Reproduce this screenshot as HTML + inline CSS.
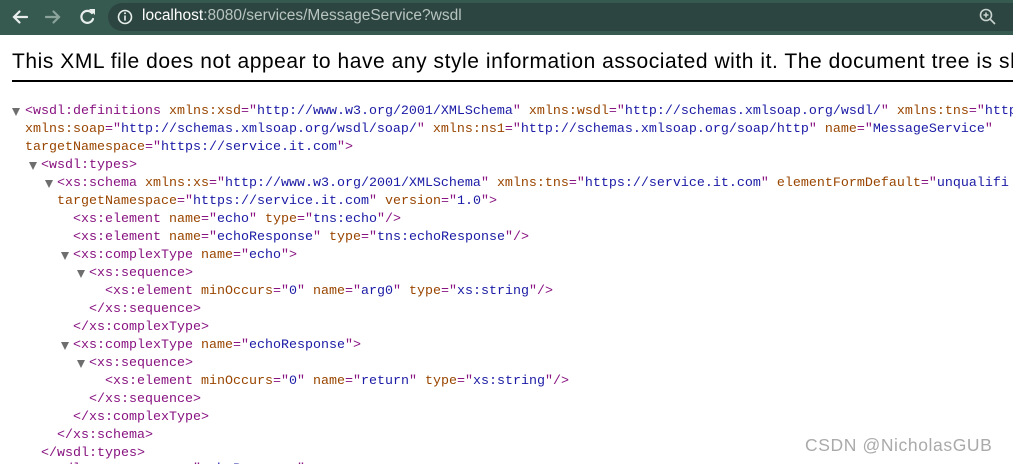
<!DOCTYPE html>
<html><head><meta charset="utf-8"><style>
html,body{margin:0;width:1013px;height:464px;overflow:hidden}
body{background:#fff;position:relative;font-family:"Liberation Sans",sans-serif}
.wrap{position:absolute;left:0;top:0;width:1013px;height:464px;overflow:hidden}
.bar{position:absolute;left:0;top:0;width:1013px;height:35px;background:#375a50}
.pill{position:absolute;left:108px;top:3px;width:905px;height:28px;border-radius:14px 0 0 14px;background:#2d4540}
.url{position:absolute;left:142px;top:7px;font-size:15.5px;color:#b8c4c0}
.url b{font-weight:normal;color:#fff}
h1{position:absolute;left:12px;top:50px;margin:0;font-weight:normal;font-size:21px;letter-spacing:0.55px;white-space:nowrap;color:#000}
.rule{position:absolute;left:12px;top:80px;width:1001px;height:2px;background:#000}
.l{position:absolute;white-space:pre;font-family:"Liberation Mono",monospace;font-size:13.33px;line-height:18px;height:18px}
.t{color:#881280}.a{color:#994500}.v{color:#1a1aa6}
.tri{position:absolute;width:0;height:0;border-left:4.5px solid transparent;border-right:4.5px solid transparent;border-top:8px solid #6e6e6e}
.wm{position:absolute;left:805px;top:435px;font-size:17.5px;letter-spacing:0.6px;color:#aaa}
.c{position:absolute;left:0;top:3px;width:1013px;height:461px;overflow:hidden}
</style></head><body><div class="wrap">
<div class="bar"></div>
<div class="pill"></div>
<svg style="position:absolute;left:0;top:0" width="140" height="35">
<g fill="none" stroke-width="2.2" stroke-linecap="round">
<path d="M27 17H14M19.5 11.5L14 17l5.5 5.5" stroke="#e8eeec"/>
<path d="M46 17h13M53.5 11.5L59 17l-5.5 5.5" stroke="#8aa39b"/>
<path d="M92 13a6 6 0 1 0 1 6" stroke="#e8eeec"/>
<circle cx="125" cy="17" r="6.5" stroke="#e8eeec" stroke-width="1.6"/>
<path d="M125 16v4" stroke="#e8eeec" stroke-width="1.6"/>
</g>
<path d="M89 9h6v6z" fill="#e8eeec"/>
<circle cx="125" cy="13.3" r="1" fill="#e8eeec"/>
</svg>
<svg style="position:absolute;left:978px;top:7px" width="20" height="20"><g fill="none" stroke="#c8d2cf" stroke-width="1.6"><circle cx="8" cy="8" r="5.5"/><path d="M12 12l5 5M8 5.5v5M5.5 8h5"/></g></svg>
<div class="url"><b>localhost</b>:8080/services/MessageService?wsdl</div>
<h1>This XML file does not appear to have any style information associated with it. The document tree is shown below.</h1>
<div class="rule"></div>
<div class="c">
<div class="tri" style="left:12px;top:105px"></div>
<div class="l" style="left:25px;top:100px"><span class="t">&lt;wsdl:definitions</span> <span class="a">xmlns:xsd</span><span class="t">="</span><span class="v">http://www.w3.org/2001/XMLSchema</span><span class="t">"</span> <span class="a">xmlns:wsdl</span><span class="t">="</span><span class="v">http://schemas.xmlsoap.org/wsdl/</span><span class="t">"</span> <span class="a">xmlns:tns</span><span class="t">="</span><span class="v">https://se</span></div>
<div class="l" style="left:25px;top:118px"><span class="a">xmlns:soap</span><span class="t">="</span><span class="v">http://schemas.xmlsoap.org/wsdl/soap/</span><span class="t">"</span> <span class="a">xmlns:ns1</span><span class="t">="</span><span class="v">http://schemas.xmlsoap.org/soap/http</span><span class="t">"</span> <span class="a">name</span><span class="t">="</span><span class="v">MessageService</span><span class="t">"</span></div>
<div class="l" style="left:25px;top:136px"><span class="a">targetNamespace</span><span class="t">="</span><span class="v">https://service.it.com</span><span class="t">"&gt;</span></div>
<div class="tri" style="left:29px;top:159px"></div>
<div class="l" style="left:41px;top:154px"><span class="t">&lt;wsdl:types&gt;</span></div>
<div class="tri" style="left:45px;top:177px"></div>
<div class="l" style="left:57px;top:172px"><span class="t">&lt;xs:schema</span> <span class="a">xmlns:xs</span><span class="t">="</span><span class="v">http://www.w3.org/2001/XMLSchema</span><span class="t">"</span> <span class="a">xmlns:tns</span><span class="t">="</span><span class="v">https://service.it.com</span><span class="t">"</span> <span class="a">elementFormDefault</span><span class="t">="</span><span class="v">unqualifi</span></div>
<div class="l" style="left:57px;top:190px"><span class="a">targetNamespace</span><span class="t">="</span><span class="v">https://service.it.com</span><span class="t">"</span> <span class="a">version</span><span class="t">="</span><span class="v">1.0</span><span class="t">"&gt;</span></div>
<div class="l" style="left:73px;top:208px"><span class="t">&lt;xs:element</span> <span class="a">name</span><span class="t">="</span><span class="v">echo</span><span class="t">"</span> <span class="a">type</span><span class="t">="</span><span class="v">tns:echo</span><span class="t">"/&gt;</span></div>
<div class="l" style="left:73px;top:226px"><span class="t">&lt;xs:element</span> <span class="a">name</span><span class="t">="</span><span class="v">echoResponse</span><span class="t">"</span> <span class="a">type</span><span class="t">="</span><span class="v">tns:echoResponse</span><span class="t">"/&gt;</span></div>
<div class="tri" style="left:61px;top:249px"></div>
<div class="l" style="left:73px;top:244px"><span class="t">&lt;xs:complexType</span> <span class="a">name</span><span class="t">="</span><span class="v">echo</span><span class="t">"&gt;</span></div>
<div class="tri" style="left:77px;top:267px"></div>
<div class="l" style="left:89px;top:262px"><span class="t">&lt;xs:sequence&gt;</span></div>
<div class="l" style="left:105px;top:280px"><span class="t">&lt;xs:element</span> <span class="a">minOccurs</span><span class="t">="</span><span class="v">0</span><span class="t">"</span> <span class="a">name</span><span class="t">="</span><span class="v">arg0</span><span class="t">"</span> <span class="a">type</span><span class="t">="</span><span class="v">xs:string</span><span class="t">"/&gt;</span></div>
<div class="l" style="left:89px;top:298px"><span class="t">&lt;/xs:sequence&gt;</span></div>
<div class="l" style="left:73px;top:316px"><span class="t">&lt;/xs:complexType&gt;</span></div>
<div class="tri" style="left:61px;top:339px"></div>
<div class="l" style="left:73px;top:334px"><span class="t">&lt;xs:complexType</span> <span class="a">name</span><span class="t">="</span><span class="v">echoResponse</span><span class="t">"&gt;</span></div>
<div class="tri" style="left:77px;top:357px"></div>
<div class="l" style="left:89px;top:352px"><span class="t">&lt;xs:sequence&gt;</span></div>
<div class="l" style="left:105px;top:370px"><span class="t">&lt;xs:element</span> <span class="a">minOccurs</span><span class="t">="</span><span class="v">0</span><span class="t">"</span> <span class="a">name</span><span class="t">="</span><span class="v">return</span><span class="t">"</span> <span class="a">type</span><span class="t">="</span><span class="v">xs:string</span><span class="t">"/&gt;</span></div>
<div class="l" style="left:89px;top:388px"><span class="t">&lt;/xs:sequence&gt;</span></div>
<div class="l" style="left:73px;top:406px"><span class="t">&lt;/xs:complexType&gt;</span></div>
<div class="l" style="left:57px;top:424px"><span class="t">&lt;/xs:schema&gt;</span></div>
<div class="l" style="left:41px;top:442px"><span class="t">&lt;/wsdl:types&gt;</span></div>
<div class="l" style="left:41px;top:458px"><span class="t">&lt;wsdl:message</span> <span class="a">name</span><span class="t">="</span><span class="v">echoResponse</span><span class="t">"&gt;</span></div>
</div>
<div class="wm">CSDN @NicholasGUB</div>
</div></body></html>
